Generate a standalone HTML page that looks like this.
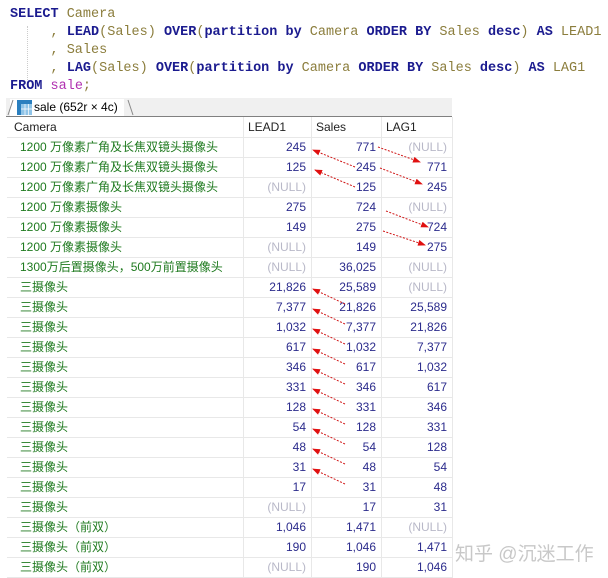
<!DOCTYPE html>
<html><head><meta charset="utf-8">
<style>
body{margin:0;width:608px;height:578px;background:#fff;position:relative;overflow:hidden;font-family:"Liberation Sans","Noto Sans CJK SC",sans-serif;}
.code{position:absolute;left:10px;font-family:"Liberation Mono","DejaVu Sans Mono",monospace;font-size:13.5px;white-space:pre;line-height:18px;color:#8b7d3c;}
.k{color:#1b1b8f;font-weight:bold;}
.m{color:#b030b0;}
.tabbar{position:absolute;left:6px;top:98px;width:446px;height:18px;background:#f0f0f0;border-bottom:1px solid #808080;}
.tab{position:absolute;left:10px;top:99px;height:17px;font-size:12px;color:#000;background:#fff;padding:0 6px 0 24px;line-height:17px;}
.grid{position:absolute;left:6px;top:117px;width:446px;border-left:1px solid #999;}
.row{position:absolute;left:0;height:20px;width:446px;border-bottom:1px solid #e8e8e8;font-size:12px;line-height:20px;}
.row div{position:absolute;top:0;height:20px;border-right:1px solid #e8e8e8;box-sizing:border-box;}
.c0{left:0;width:237px;padding-left:13px;color:#1f7a1f;}
.c1{left:237px;width:68px;text-align:right;padding-right:5px;color:#2b2b8c;}
.c2{left:305px;width:70px;text-align:right;padding-right:5px;color:#2b2b8c;}
.c3{left:375px;width:71px;text-align:right;padding-right:5px;color:#2b2b8c;}
.n{color:#b8b8c8!important;}
.h div{color:#222!important;text-align:left;padding-left:4px;}
.h .c0{padding-left:7px;}
.wm{position:absolute;left:455px;top:539px;font-size:19px;color:#c8c8c8;}
</style></head><body>
<div class="code" style="top:6px"><span class="k">SELECT</span> Camera</div>
<div class="code" style="top:24px">     , <span class="k">LEAD</span>(Sales) <span class="k">OVER</span>(<span class="k">partition by</span> Camera <span class="k">ORDER BY</span> Sales <span class="k">desc</span>) <span class="k">AS</span> LEAD1</div>
<div class="code" style="top:42px">     , Sales</div>
<div class="code" style="top:60px">     , <span class="k">LAG</span>(Sales) <span class="k">OVER</span>(<span class="k">partition by</span> Camera <span class="k">ORDER BY</span> Sales <span class="k">desc</span>) <span class="k">AS</span> LAG1</div>
<div class="code" style="top:78px"><span class="k">FROM</span> <span class="m">sale</span>;</div>
<div style="position:absolute;left:27px;top:26px;height:54px;border-left:1px dotted #ccc"></div>
<div class="tabbar"></div>
<div class="tab">sale (652r × 4c)</div>
<svg style="position:absolute;left:0;top:98px" width="140" height="19"><line x1="8" y1="17" x2="13" y2="2" stroke="#888"/><line x1="128" y1="2" x2="133" y2="17" stroke="#888"/>
<rect x="17" y="2" width="15" height="15" fill="#8fc4e8"/><rect x="17" y="2" width="15" height="4" fill="#2a7fbf"/><rect x="17" y="2" width="4" height="15" fill="#2a7fbf"/>
<path d="M21 11H32M25 6V17M28.5 6V17" stroke="#fff" stroke-width="0.7"/></svg>
<div class="grid">
<div class="row h" style="top:0"><div class="c0">Camera</div><div class="c1">LEAD1</div><div class="c2">Sales</div><div class="c3">LAG1</div></div>
</div>
<div id="rows" class="grid"></div>
<script>
var d=[
["1200 万像素广角及长焦双镜头摄像头","245","771","N"],
["1200 万像素广角及长焦双镜头摄像头","125","245","771"],
["1200 万像素广角及长焦双镜头摄像头","N","125","245"],
["1200 万像素摄像头","275","724","N"],
["1200 万像素摄像头","149","275","724"],
["1200 万像素摄像头","N","149","275"],
["1300万后置摄像头，500万前置摄像头","N","36,025","N"],
["三摄像头","21,826","25,589","N"],
["三摄像头","7,377","21,826","25,589"],
["三摄像头","1,032","7,377","21,826"],
["三摄像头","617","1,032","7,377"],
["三摄像头","346","617","1,032"],
["三摄像头","331","346","617"],
["三摄像头","128","331","346"],
["三摄像头","54","128","331"],
["三摄像头","48","54","128"],
["三摄像头","31","48","54"],
["三摄像头","17","31","48"],
["三摄像头","N","17","31"],
["三摄像头（前双）","1,046","1,471","N"],
["三摄像头（前双）","190","1,046","1,471"],
["三摄像头（前双）","N","190","1,046"]];
var h="";
function c(cls,v){return v=="N"?'<div class="'+cls+' n">(NULL)</div>':'<div class="'+cls+'">'+v+'</div>';}
for(var i=0;i<d.length;i++){h+='<div class="row" style="top:'+(20+i*20)+'px">'+'<div class="c0">'+d[i][0]+'</div>'+c("c1",d[i][1])+c("c2",d[i][2])+c("c3",d[i][3])+'</div>';}
document.getElementById("rows").innerHTML=h;
var a=[[355,167,313,150],[355,187,315,170],[378,147,420,162],[380,168,422,184],[386,211,428,227],[383,231,425,245]];
for(var k=7;k<=16;k++){var y=137+20*k+10;a.push([345,y+17,313,y+2]);}
var s='<svg style="position:absolute;left:0;top:0" width="608" height="578"><defs><marker id="ar" markerWidth="8" markerHeight="6" refX="7" refY="3" orient="auto"><path d="M0 0L8 3L0 6z" fill="#e01010"/></marker></defs>';
a.forEach(function(p){s+='<line x1="'+p[0]+'" y1="'+p[1]+'" x2="'+p[2]+'" y2="'+p[3]+'" stroke="#d01818" stroke-width="1" stroke-dasharray="2,1.5" marker-end="url(#ar)"/>';});
s+='</svg>';
document.body.insertAdjacentHTML("beforeend",s);
</script>
<div class="wm">知乎 @沉迷工作</div>
</body></html>
